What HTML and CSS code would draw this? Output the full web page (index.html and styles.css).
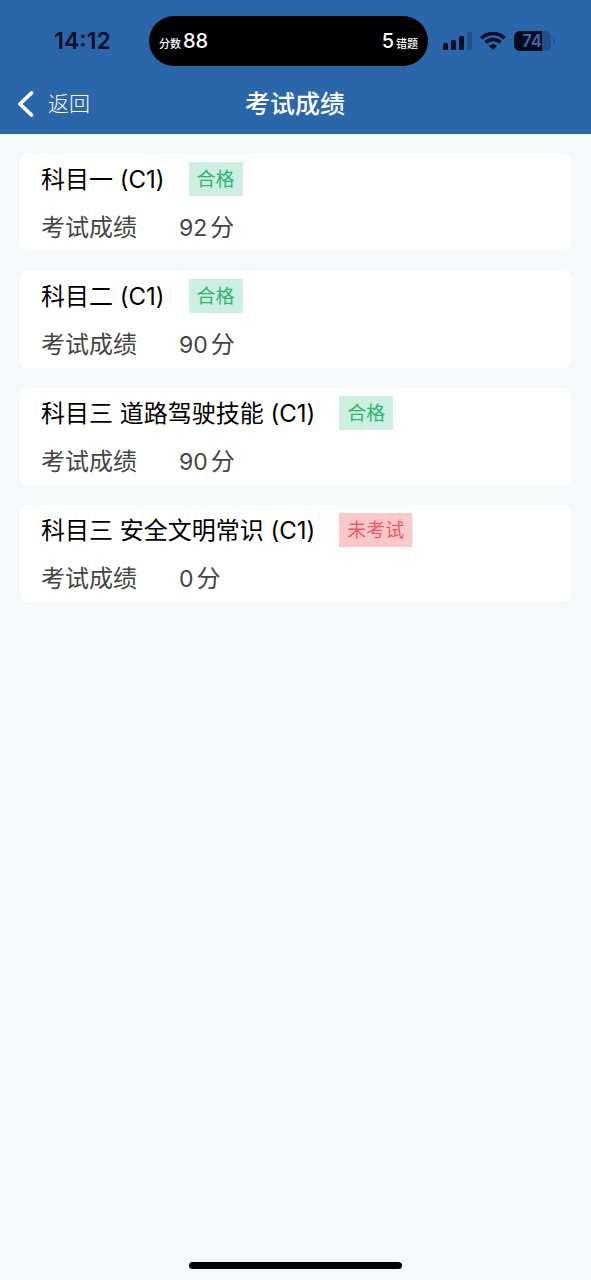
FILE: index.html
```html
<!DOCTYPE html>
<html lang="zh-CN">
<head>
<meta charset="utf-8">
<meta name="viewport" content="width=device-width, initial-scale=1">
<title>考试成绩</title>
<link rel="stylesheet" href="styles.css">
</head>
<body>
<header class="header">
  <div class="status">
    <time class="clock">14:12</time>
    <div class="island">
      <span class="island-item"><small>分数</small><b>88</b></span>
      <span class="island-item island-end"><b>5</b><small>错题</small></span>
    </div>
    <div class="indicators">
      <svg class="signal" width="29" height="18" viewBox="0 0 29 18" aria-hidden="true">
        <g fill="#020f26"><rect x="0" y="11" width="5" height="7" rx="1.5"/><rect x="8" y="8" width="5" height="10" rx="1.5"/><rect x="16" y="4" width="5" height="14" rx="1.5"/></g>
        <rect x="24" y="0" width="5" height="18" rx="1.5" fill="#255387"/>
      </svg>
      <svg class="wifi" width="26" height="18" viewBox="0 0 26 18" aria-hidden="true">
        <g fill="none" stroke="#020f26" stroke-width="3.6"><path d="M1.3 6.3a16.6 16.6 0 0 1 23.4 0"/><path d="M5.5 10.6a10.6 10.6 0 0 1 15 0"/></g>
        <path d="M13 18l-4-4.1a5.7 5.7 0 0 1 8 0z" fill="#020f26"/>
      </svg>
      <svg class="battery" width="42" height="20" viewBox="0 0 42 20" role="img" aria-label="74%">
        <path d="M28 0h3a6 6 0 0 1 6 6v8a6 6 0 0 1-6 6h-3z" fill="#235088"/>
        <path d="M6 0h22v20H6a6 6 0 0 1-6-6V6a6 6 0 0 1 6-6z" fill="#010b1c"/>
        <path d="M39 7q2 1 2 3t-2 3z" fill="#235088"/>
        <text x="18" y="16" text-anchor="middle" class="battery-text">74</text>
      </svg>
    </div>
  </div>
  <nav class="nav">
    <button class="back" type="button">
      <svg width="18" height="28" viewBox="0 0 18 28" aria-hidden="true"><path d="M14.5 3L3 14l11.5 11" fill="none" stroke="#fff" stroke-width="3.8" stroke-linecap="round" stroke-linejoin="round"/></svg>
      <span>返回</span>
    </button>
    <h1 class="title">考试成绩</h1>
  </nav>
</header>
<main class="list">
  <section class="card">
    <div class="row"><h2 class="subject">科目一 (C1)</h2><span class="tag pass">合格</span></div>
    <div class="row score"><span>考试成绩</span><span class="value"><span class="num">92</span>分</span></div>
  </section>
  <section class="card">
    <div class="row"><h2 class="subject">科目二 (C1)</h2><span class="tag pass">合格</span></div>
    <div class="row score"><span>考试成绩</span><span class="value"><span class="num">90</span>分</span></div>
  </section>
  <section class="card">
    <div class="row"><h2 class="subject">科目三 道路驾驶技能 (C1)</h2><span class="tag pass">合格</span></div>
    <div class="row score"><span>考试成绩</span><span class="value"><span class="num">90</span>分</span></div>
  </section>
  <section class="card">
    <div class="row"><h2 class="subject">科目三 安全文明常识 (C1)</h2><span class="tag pending">未考试</span></div>
    <div class="row score"><span>考试成绩</span><span class="value"><span class="num">0</span>分</span></div>
  </section>
</main>
<footer class="home"><div class="home-bar"></div></footer>
</body>
</html>
```
FILE: styles.css
```css
* { box-sizing: border-box; }
body {
  margin: 0;
  min-height: 100vh;
  display: flex;
  flex-direction: column;
  background: #f5f9fb;
  color: #000;
  font-family: Inter, "Noto Sans CJK SC", sans-serif;
}
.header { background: #2c66aa; color: #fff; padding-top: 16px; }
.status {
  display: grid;
  grid-template-columns: 1fr 279px 1fr;
  align-items: center;
  padding-right: 14px;
}
.clock {
  justify-self: center;
  padding-left: 16px;
  color: #020f26;
  font-size: 23px;
  line-height: 32px;
  font-weight: 600;
}
.island {
  display: flex;
  justify-content: space-between;
  align-items: center;
  height: 50px;
  padding: 2px 10px 0;
  border-radius: 25px;
  background: #000;
}
.island-item { display: flex; align-items: baseline; gap: 2px; line-height: 24px; }
.island-item b { font-size: 20px; font-weight: 500; }
.island-item small { font-size: 11px; font-weight: 500; }
.indicators {
  display: flex;
  align-items: center;
  gap: 8px;
  padding-left: 15px;
}
.indicators svg { flex: none; }
.battery-text { font-size: 17px; font-weight: 600; fill: #3a6cab; }
.nav {
  display: grid;
  grid-template-columns: 1fr auto 1fr;
  align-items: center;
  height: 68px;
  padding: 8px 18px 0 17px;
}
.back {
  justify-self: start;
  display: flex;
  align-items: center;
  gap: 13px;
  padding: 0;
  border: 0;
  background: none;
  color: #fff;
  font: 300 21px/30px Inter, "Noto Sans CJK SC", sans-serif;
}
.title { margin: 0; font-size: 25px; line-height: 36px; font-weight: 500; }
.list {
  flex: 1;
  display: flex;
  flex-direction: column;
  gap: 20px;
  padding: 20px;
}
.card {
  display: flex;
  flex-direction: column;
  gap: 15px;
  padding: 8px 21px 6px;
  border-radius: 8px;
  background: #fff;
}
.row { display: flex; align-items: center; gap: 24px; line-height: 34px; font-size: 24px; }
.subject { margin: 0; padding-top: 2px; line-height: 32px; font-size: 24px; font-weight: 400; }
.tag { padding: 2px 8px 0; line-height: 32px; font-size: 19px; }
.pass { background: #cdeee0; color: #2bb673; }
.pending { background: #fdc8ca; color: #ed5a5f; }
.score { gap: 42px; color: #444; }
.value { display: flex; gap: 3px; }
.num { font-size: 23px; }
.home { display: flex; justify-content: center; padding-bottom: 11px; }
.home-bar { width: 36%; height: 7px; border-radius: 4px; background: #000; }
```
